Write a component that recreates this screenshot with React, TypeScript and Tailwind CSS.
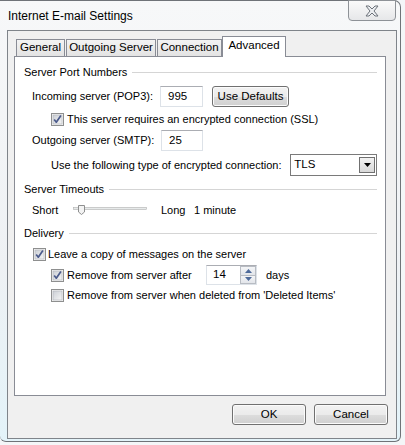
import React from "react";

const font = { fontFamily: '"Liberation Sans", Arial, sans-serif' };

function Check({ checked }: { checked: boolean }) {
  return (
    <svg width="13" height="13" viewBox="0 0 13 13" className="shrink-0">
      <defs>
        <linearGradient id="cbg" x1="0" y1="0" x2="1" y2="1">
          <stop offset="0" stopColor="#cbcfd5" />
          <stop offset="1" stopColor="#f6f6f6" />
        </linearGradient>
      </defs>
      <rect x="0.5" y="0.5" width="12" height="12" fill="#f4f4f4" stroke="#8e8f8f" />
      <rect x="2" y="2" width="9" height="9" fill="url(#cbg)" stroke="#aeb3b9" strokeWidth="0.6" />
      {checked && (
        <path d="M3.2 6.4 L5.3 9.2 L9.9 2.6" fill="none" stroke="#4b5b8c" strokeWidth="1.7" strokeLinejoin="round" />
      )}
    </svg>
  );
}

function Btn({ children, w }: { children: React.ReactNode; w: string }) {
  return (
    <div
      className={`${w} h-[21px] flex items-center justify-center rounded-[3px] border border-[#707070] shadow-[inset_0_0_0_1px_#fbfbfb] bg-[linear-gradient(to_bottom,#f2f2f2_0%,#ebebeb_50%,#dddddd_51%,#cfcfcf_100%)] text-[11.5px] text-black whitespace-nowrap`}
    >
      {children}
    </div>
  );
}

function TextBox({ value, w }: { value: string; w: string }) {
  return (
    <div className={`${w} h-[21px] bg-white border border-[#dde2e8] border-t-[#abadb3] flex items-center pl-[7px] text-[11.5px]`}>
      {value}
    </div>
  );
}

function Header({ label }: { label: string }) {
  return (
    <div className="h-[16px] flex items-center">
      <span className="text-black leading-none whitespace-nowrap">{label}</span>
      <div className="flex-1 h-px bg-[#d5d5d5] ml-[5px]" />
    </div>
  );
}

const tab =
  "h-[17px] flex items-center justify-center border border-b-0 border-[#898c95] bg-[linear-gradient(to_bottom,#f3f3f3,#e3e3e3)] whitespace-nowrap";

export default function App() {
  return (
    <div className="w-[405px] h-[445px] bg-[#f4f6f8] overflow-hidden relative" style={font}>
      <div className="w-[401px] h-[442px] rounded-tr-[7px] rounded-br-[6px] rounded-bl-[6px] border-r border-b border-t border-[#6f7378] bg-[linear-gradient(to_bottom,#f7f8f9_0%,#eef1f4_60%,#e3f3f9_100%)] relative">
        {/* title bar */}
        <div className="h-[29px] flex items-center pl-[8px] text-[12px] text-black whitespace-nowrap">
          Internet E-mail Settings
        </div>
        <div className="absolute left-[348px] top-[-1px] w-[48px] h-[21px] rounded-b-[4px] border border-[#8e9297] bg-[linear-gradient(to_bottom,#fafafa,#e6e7e9)] flex items-center justify-center">
          <svg width="16" height="12" viewBox="0 0 16 12">
            <path
              d="M2 1 H5 L8 4 L11 1 H14 L10 6 L14 11 H11 L8 8 L5 11 H2 L6 6 Z"
              fill="#eceef1"
              stroke="#6c727a"
              strokeWidth="1"
              strokeLinejoin="round"
            />
          </svg>
        </div>
        {/* client area */}
        <div className="ml-[7px] w-[390px] h-[409px] border border-[#7f848a] bg-[#f0f0f0] flex flex-col text-[11px]">
          <div className="pl-[6px] pt-[5px]">
            {/* tabs */}
            <div className="flex items-end h-[20px] pl-[2px] text-[11.5px]">
              <div className={`${tab} w-[49px]`}>General</div>
              <div className={`${tab} w-[90px] ml-[1px]`}>Outgoing Server</div>
              <div className={`${tab} w-[65px] ml-[1px]`}>Connection</div>
              <div className="h-[21px] flex items-center justify-center border border-b-0 border-[#898c95] bg-white w-[64px] mb-[-1px] relative z-10 pb-[3px] whitespace-nowrap">
                Advanced
              </div>
            </div>
            {/* panel */}
            <div className="w-[372px] h-[340px] bg-white border border-[#898c95] pl-[9px] pr-[8px] text-black flex flex-col whitespace-nowrap">
              <div className="mt-[7px]"><Header label="Server Port Numbers" /></div>
              <div className="mt-[6px] h-[21px] flex items-center pl-[8px]">
                <span className="w-[128px]">Incoming server (POP3):</span>
                <TextBox value="995" w="w-[43px]" />
                <div className="ml-[9px]"><Btn w="w-[77px]">Use Defaults</Btn></div>
              </div>
              <div className="mt-[4px] h-[16px] flex items-center pl-[27px]">
                <Check checked />
                <span className="ml-[3px]">This server requires an encrypted connection (SSL)</span>
              </div>
              <div className="mt-[3px] h-[21px] flex items-center pl-[8px]">
                <span className="w-[129px]">Outgoing server (SMTP):</span>
                <TextBox value="25" w="w-[42px]" />
              </div>
              <div className="mt-[3px] h-[22px] flex items-center pl-[27px]">
                <span className="w-[240px]">Use the following type of encrypted connection:</span>
                <div className="w-[87px] h-[22px] border border-[#7a7a7a] bg-white flex items-center justify-between pl-[3px] pr-[1px]">
                  <span className="text-[11.5px]">TLS</span>
                  <div className="w-[16px] h-[16px] border border-[#707070] bg-[linear-gradient(to_bottom,#f2f2f2,#d8d8d8)] flex items-center justify-center">
                    <svg width="7" height="4" viewBox="0 0 7 4"><path d="M0 0 H7 L3.5 4 Z" fill="#000" /></svg>
                  </div>
                </div>
              </div>
              <div className="mt-[5px]"><Header label="Server Timeouts" /></div>
              <div className="mt-[3px] h-[20px] flex items-center pl-[8px]">
                <span className="w-[41px]">Short</span>
                <svg width="74" height="12" viewBox="0 0 74 12" className="shrink-0">
                  <rect x="0.5" y="3.5" width="73" height="2" fill="#e7eaea" stroke="#b0b0b0" strokeWidth="0.6" />
                  <path d="M5.5 1.5 H11.5 V8 L8.5 10.5 L5.5 8 Z" fill="#f3f3f3" stroke="#8e8f8f" />
                </svg>
                <span className="ml-[14px] w-[33px]">Long</span>
                <span>1 minute</span>
              </div>
              <div className="mt-[5px]"><Header label="Delivery" /></div>
              <div className="mt-[5px] h-[16px] flex items-center pl-[9px]">
                <Check checked />
                <span className="ml-[2px]">Leave a copy of messages on the server</span>
              </div>
              <div className="mt-[3px] h-[20px] flex items-center pl-[27px]">
                <Check checked />
                <span className="ml-[3px] w-[139px]">Remove from server after</span>
                <div className="w-[51px] h-[20px] border border-[#dde2e8] border-t-[#abadb3] bg-white flex">
                  <span className="flex-1 flex items-center pl-[6px] text-[11.5px]">14</span>
                  <div className="w-[16px] flex flex-col">
                    <div className="flex-1 border border-[#b8bcc3] bg-[linear-gradient(to_bottom,#f4f5f7,#e2e5ea)] flex items-center justify-center">
                      <svg width="7" height="4" viewBox="0 0 7 4"><path d="M0 4 H7 L3.5 0 Z" fill="#4e6a9a" /></svg>
                    </div>
                    <div className="flex-1 border border-t-0 border-[#b8bcc3] bg-[linear-gradient(to_bottom,#f4f5f7,#e2e5ea)] flex items-center justify-center">
                      <svg width="7" height="4" viewBox="0 0 7 4"><path d="M0 0 H7 L3.5 4 Z" fill="#4e6a9a" /></svg>
                    </div>
                  </div>
                </div>
                <span className="ml-[9px]">days</span>
              </div>
              <div className="mt-[2px] h-[16px] flex items-center pl-[27px]">
                <Check checked={false} />
                <span className="ml-[3px]">Remove from server when deleted from 'Deleted Items'</span>
              </div>
            </div>
          </div>
          <div className="flex justify-end gap-[8px] mt-[8px] pr-[8px]">
            <Btn w="w-[74px]">OK</Btn>
            <Btn w="w-[74px]">Cancel</Btn>
          </div>
        </div>
      </div>
    </div>
  );
}
